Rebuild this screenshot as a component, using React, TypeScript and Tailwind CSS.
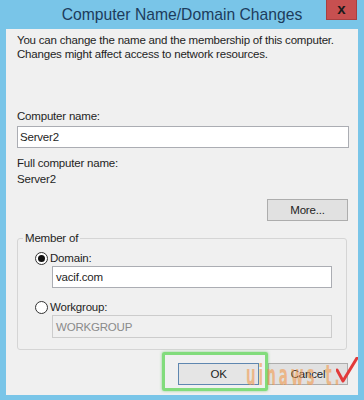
import React from "react";

function Radio({ checked }: { checked: boolean }) {
  return (
    <span className="w-[13px] h-[13px] rounded-full border border-[#333333] bg-white flex items-center justify-center shrink-0">
      {checked && <span className="w-[7px] h-[7px] rounded-full bg-[#111111]" />}
    </span>
  );
}

export default function App() {
  return (
    <div className="relative w-[364px] h-[400px] bg-[#79c5e8] flex flex-col font-['Liberation_Sans',Arial,sans-serif] overflow-hidden">
      {/* Title bar */}
      <div className="h-[29px] flex items-center justify-center shrink-0">
        <span className="text-[15.7px] text-[#1d3c5c] leading-none">Computer Name/Domain Changes</span>
      </div>
      <div className="absolute right-[7px] top-0 w-[31px] h-[20px] bg-[#c75050] border border-[#a84040] border-t-0 flex items-center justify-center">
        <span className="text-[15px] font-bold text-[#1a1a1a] leading-none -mt-[2px]">x</span>
      </div>

      {/* Client area */}
      <div className="mx-[6px] h-[366px] bg-[#f0f0f0] flex flex-col pl-[11px] pr-[9px] text-[11.5px] tracking-[-0.2px] leading-[14px] text-[#1e1e1e]">
        <p className="mt-[4px] whitespace-nowrap">
          You can change the name and the membership of this computer.
          <br />
          Changes might affect access to network resources.
        </p>

        <div className="mt-[48px]">Computer name:</div>
        <div className="mt-[3px] h-[22px] border border-[#abadb3] bg-white flex items-center pl-[2px]">Server2</div>

        <div className="mt-[8px]">Full computer name:</div>
        <div className="mt-[2px]">Server2</div>

        <div className="mt-[13px] self-end mr-[1px] w-[81px] h-[22px] bg-[#e1e1e1] border border-[#adadad] flex items-center justify-center">
          More...
        </div>

        <fieldset className="mt-[10px] w-[330px] border border-[#d5d5d5] rounded-[3px] p-0 m-0 min-w-0">
          <legend className="ml-[5px] px-[2px]">Member of</legend>
          <div className="flex flex-col pl-[17px] pb-[11px]">
            <div className="mt-[6px] flex items-center gap-[2px]">
              <Radio checked />
              <span>Domain:</span>
            </div>
            <div className="mt-[1px] ml-[17px] w-[280px] h-[22px] border border-[#abadb3] bg-white flex items-center pl-[3px]">
              vacif.com
            </div>
            <div className="mt-[12px] flex items-center gap-[2px]">
              <Radio checked={false} />
              <span>Workgroup:</span>
            </div>
            <div className="mt-[1px] ml-[17px] w-[280px] h-[23px] border border-[#cccccc] bg-[#f0f0f0] flex items-center pl-[3px] text-[#8a8a8a]">
              WORKGROUP
            </div>
          </div>
        </fieldset>

        <div className="mt-[13px] flex justify-end gap-[9px] mr-[1px]">
          <div className="w-[81px] h-[22px] bg-[#e5e5e5] border border-[#5f87b0] flex items-center justify-center">OK</div>
          <div className="w-[80px] h-[22px] bg-[#e1e1e1] border border-[#adadad] flex items-center justify-center">Cancel</div>
        </div>
      </div>

      {/* Green highlight */}
      <div className="absolute left-[162px] top-[352px] w-[106px] h-[39px] border-[3px] border-[#82dc7c] rounded-[2px] shadow-[0_0_3px_rgba(100,200,100,0.7)]" />

      {/* Watermark */}
      <div className="absolute left-[246px] top-[362px] flex items-center opacity-60 pointer-events-none">
        <span className="inline-block origin-top scale-y-[1.9] font-['DejaVu_Sans_Condensed','Liberation_Sans',sans-serif] font-bold text-[15px] leading-none tracking-[3px] text-[#f29a4e]">
          uinaws t.
        </span>
      </div>
      <svg className="absolute left-[336px] top-[357px]" width="22" height="26" viewBox="0 0 22 26">
        <path d="M1 13 L7 24 L21 1" fill="none" stroke="#e23a3a" strokeWidth="3" strokeLinecap="round" strokeLinejoin="round" />
      </svg>
    </div>
  );
}
